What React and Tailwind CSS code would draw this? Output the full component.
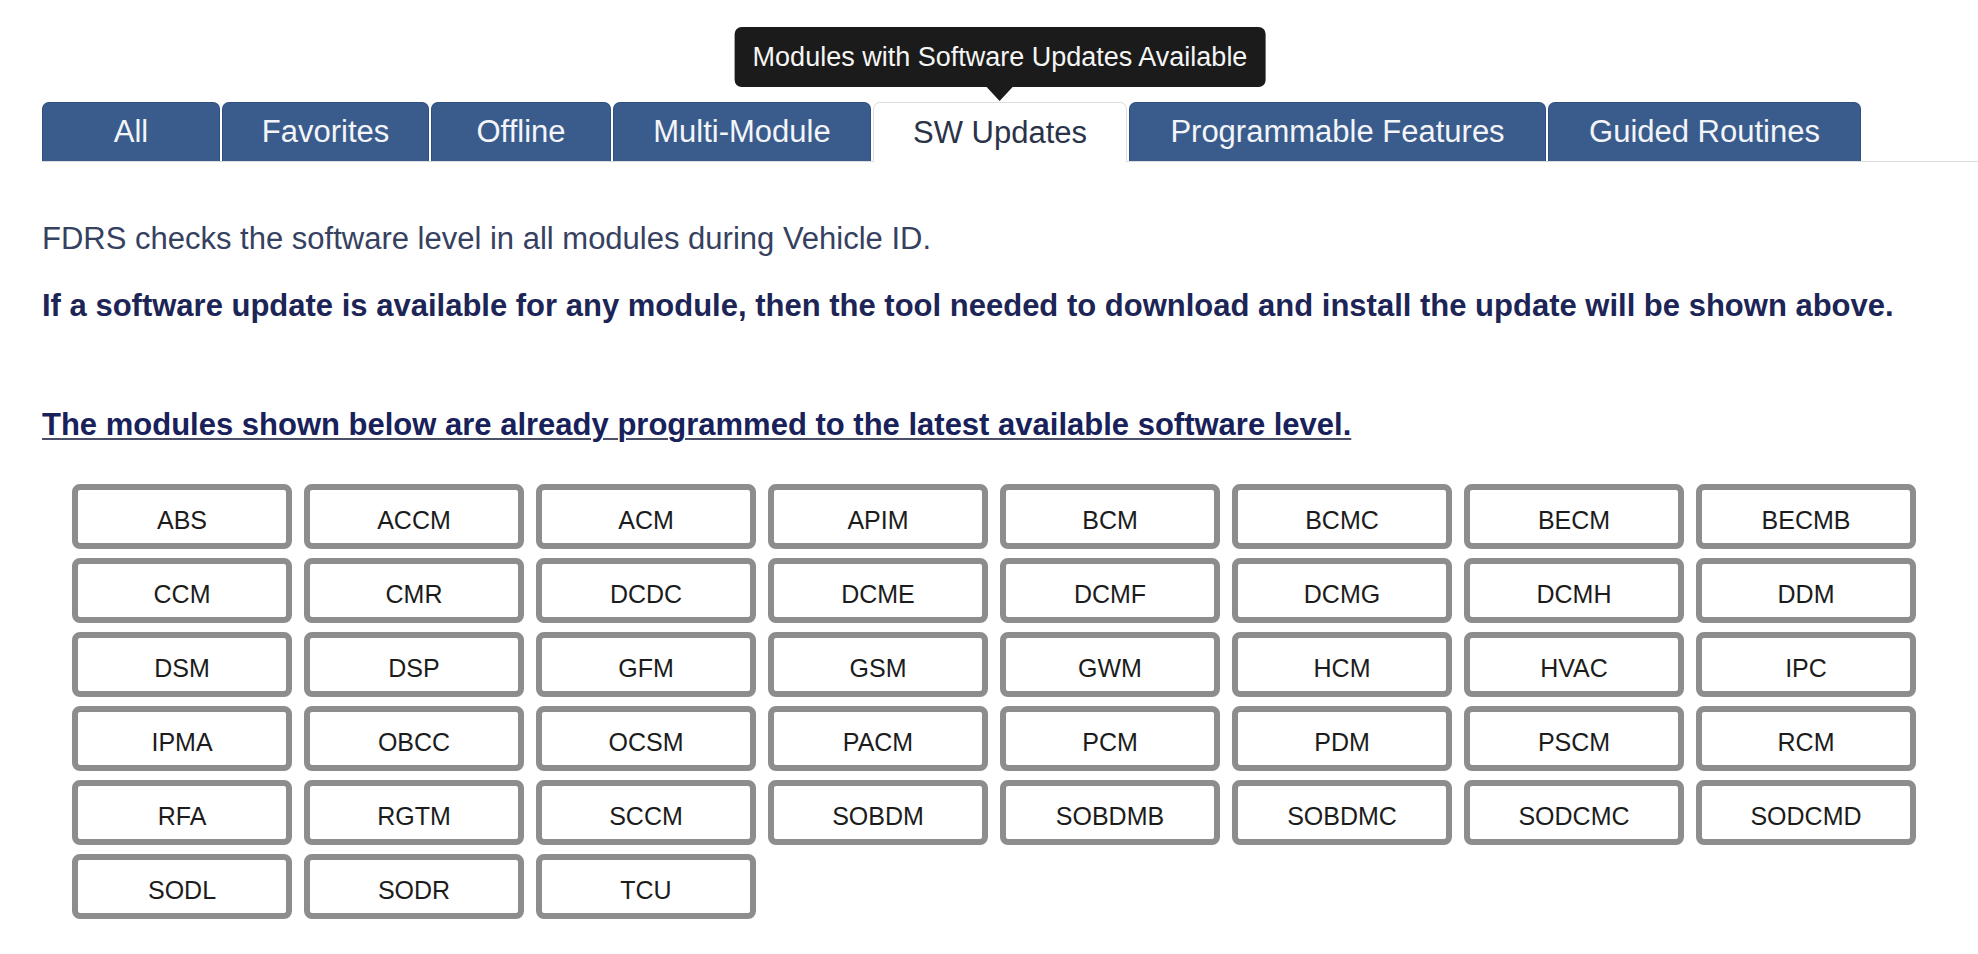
import React from 'react'

const tabs = [
  { label: 'All', width: 'w-[178px]' },
  { label: 'Favorites', width: 'w-[207px]' },
  { label: 'Offline', width: 'w-[180px]' },
  { label: 'Multi-Module', width: 'w-[258px]' },
  { label: 'SW Updates', width: 'w-[254px]', active: true },
  { label: 'Programmable Features', width: 'w-[417px]' },
  { label: 'Guided Routines', width: 'w-[313px]' },
]

const modules = [
  'ABS', 'ACCM', 'ACM', 'APIM', 'BCM', 'BCMC', 'BECM', 'BECMB',
  'CCM', 'CMR', 'DCDC', 'DCME', 'DCMF', 'DCMG', 'DCMH', 'DDM',
  'DSM', 'DSP', 'GFM', 'GSM', 'GWM', 'HCM', 'HVAC', 'IPC',
  'IPMA', 'OBCC', 'OCSM', 'PACM', 'PCM', 'PDM', 'PSCM', 'RCM',
  'RFA', 'RGTM', 'SCCM', 'SOBDM', 'SOBDMB', 'SOBDMC', 'SODCMC', 'SODCMD',
  'SODL', 'SODR', 'TCU',
]

const Tab = ({ label, width, active }) => {
  if (active) {
    return (
      <div className={`relative ${width} -mb-px h-[60px] rounded-t-[7px] border border-b-0 border-[#dedede] bg-white text-center text-[31px] leading-[59px] text-[#2b3349]`}>
        {label}
        {/* tooltip */}
        <div className="absolute bottom-full left-1/2 mb-[2px] flex -translate-x-1/2 flex-col items-center">
          <div className="whitespace-nowrap rounded-[7px] bg-[#1b1b1b] px-[18px] text-[27px] leading-[60px] text-[#f5f5f5]">
            Modules with Software Updates Available
          </div>
          <div className="h-0 w-0 border-x-[13px] border-t-[14px] border-x-transparent border-t-[#1b1b1b]" />
        </div>
      </div>
    )
  }
  return (
    <div className={`${width} h-[59px] rounded-t-[7px] border border-b-0 border-[#2f507f] bg-[#3a5c8c] text-center text-[31px] leading-[58px] text-[#f3f5f9]`}>
      {label}
    </div>
  )
}

const App = () => {
  return (
    <div className="bg-white pt-[102px] pb-[30px] font-['Liberation_Sans',Arial,sans-serif]">
      <div className="ml-[42px] flex items-end gap-[2px] border-b border-[#dcdcdc]">
        {tabs.map((t) => (
          <Tab key={t.label} {...t} />
        ))}
      </div>

      <div className="px-[42px]">
        <p className="mt-[57px] text-[31px] leading-[40px] text-[#35415f]">
          FDRS checks the software level in all modules during Vehicle ID.
        </p>
        <p className="mt-[27px] text-[31px] font-bold leading-[40px] text-[#1c2556]">
          If a software update is available for any module, then the tool needed to download and install the update will be shown above.
        </p>
        <p className="mt-[79px] text-[31px] font-bold leading-[40px] text-[#18215a] underline decoration-[#4b5068] decoration-2 underline-offset-[3px]">
          The modules shown below are already programmed to the latest available software level.
        </p>

        <div className="ml-[30px] mt-[39px] grid w-[1844px] grid-cols-8 gap-x-[12px] gap-y-[9px]">
          {modules.map((m) => (
            <div
              key={m}
              className="h-[65px] rounded-[8px] border-[6px] border-[#8d8d8d] bg-white pt-[8px] text-center text-[25px] leading-[44px] text-[#1c1c1c]"
            >
              {m}
            </div>
          ))}
        </div>
      </div>
    </div>
  )
}

export default App
